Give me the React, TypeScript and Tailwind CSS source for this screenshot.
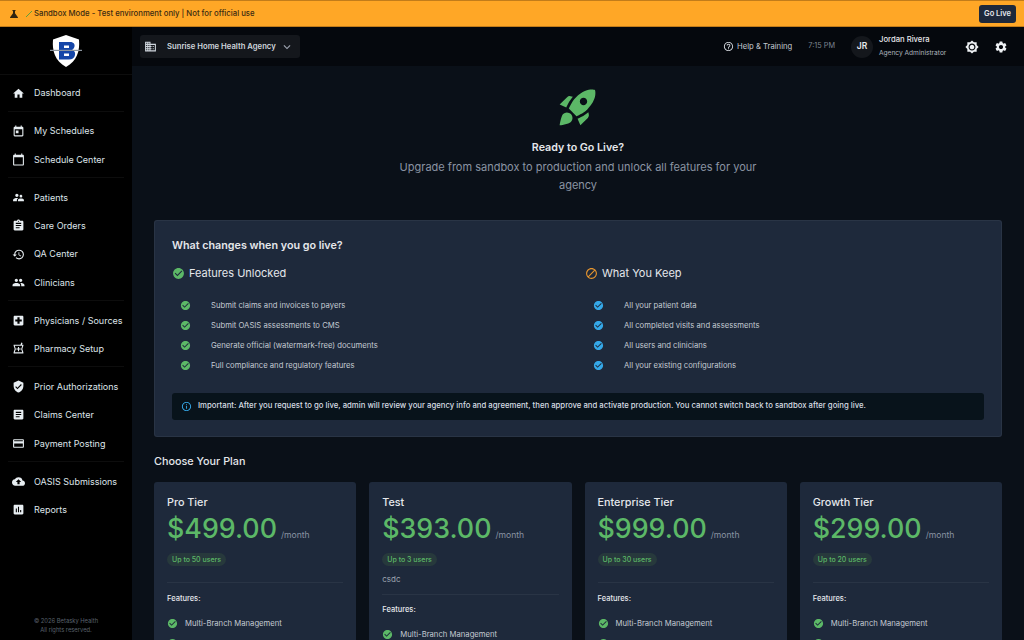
import { ReactNode } from 'react'
import {
  MdArticle,
  MdAssessment,
  MdAssignment,
  MdBlock,
  MdBrightness7,
  MdBusiness,
  MdCalendarToday,
  MdCheckCircle,
  MdCloudUpload,
  MdCreditCard,
  MdHelpOutline,
  MdHistory,
  MdHome,
  MdInfoOutline,
  MdKeyboardArrowDown,
  MdLocalHospital,
  MdOutlineLocalPharmacy,
  MdPeople,
  MdRocketLaunch,
  MdScience,
  MdSettings,
  MdSupervisorAccount,
  MdToday,
  MdVerifiedUser,
} from 'react-icons/md'

const navGroups: { label: string; icon: ReactNode }[][] = [
  [{ label: 'Dashboard', icon: <MdHome /> }],
  [
    { label: 'My Schedules', icon: <MdToday /> },
    { label: 'Schedule Center', icon: <MdCalendarToday /> },
  ],
  [
    { label: 'Patients', icon: <MdSupervisorAccount /> },
    { label: 'Care Orders', icon: <MdAssignment /> },
    { label: 'QA Center', icon: <MdHistory /> },
    { label: 'Clinicians', icon: <MdPeople /> },
  ],
  [
    { label: 'Physicians / Sources', icon: <MdLocalHospital /> },
    { label: 'Pharmacy Setup', icon: <MdOutlineLocalPharmacy /> },
  ],
  [
    { label: 'Prior Authorizations', icon: <MdVerifiedUser /> },
    { label: 'Claims Center', icon: <MdArticle /> },
    { label: 'Payment Posting', icon: <MdCreditCard /> },
  ],
  [
    { label: 'OASIS Submissions', icon: <MdCloudUpload /> },
    { label: 'Reports', icon: <MdAssessment /> },
  ],
]

const unlocked = [
  'Submit claims and invoices to payers',
  'Submit OASIS assessments to CMS',
  'Generate official (watermark-free) documents',
  'Full compliance and regulatory features',
]

const kept = [
  'All your patient data',
  'All completed visits and assessments',
  'All users and clinicians',
  'All your existing configurations',
]

const plans = [
  { name: 'Pro Tier', price: '$499.00', users: 'Up to 50 users' },
  { name: 'Test', price: '$393.00', users: 'Up to 3 users', note: 'csdc' },
  { name: 'Enterprise Tier', price: '$999.00', users: 'Up to 30 users' },
  { name: 'Growth Tier', price: '$299.00', users: 'Up to 20 users' },
]

function Logo() {
  return (
    <svg width="34" height="34" viewBox="0 0 34 34">
      <path d="M17 1 L30 5.500 C31 17 28 27 17 33 C6 27 3 17 4 5.500 Z" fill="#ffffff" />
      <path d="M10 8 H21 C25 8 26 10.500 25.500 12.500 C25 14.500 24 15.500 23 16 C25.500 16.500 26.500 18.500 26 21 C25.500 24 23 25.500 20 25.500 H10 Z" fill="#1546a8" />
      <rect x="15" y="11.500" width="5" height="2.500" fill="#ffffff" />
      <rect x="15" y="19.500" width="5" height="2.500" fill="#ffffff" />
      <rect x="1" y="15.800" width="32" height="1.200" fill="#8b949e" />
    </svg>
  )
}

function Sidebar() {
  return (
    <aside className="flex w-[132px] shrink-0 flex-col bg-black">
      <div className="flex h-[48px] shrink-0 items-center justify-center border-b border-white/5">
        <Logo />
      </div>
      <nav className="flex flex-col px-[8px] pt-[4px]">
        {navGroups.map((group, i) => (
          <div key={i} className={i > 0 ? 'mt-[3.6px] border-t border-white/5 pt-[5px]' : ''}>
            {group.map((item) => (
              <div key={item.label} className="flex h-[28.35px] items-center gap-[9px] pl-[4px] text-[9px] text-[#dfe5ea]">
                <span className="shrink-0 text-[13px] text-[#e8eef2]">{item.icon}</span>
                <span className="whitespace-nowrap">{item.label}</span>
              </div>
            ))}
          </div>
        ))}
      </nav>
      <div className="mt-auto pb-[6px] text-center text-[5.8px] leading-[9px] text-[#5b636d]">
        <p>© 2026 Betasky Health</p>
        <p>All rights reserved.</p>
      </div>
    </aside>
  )
}

function Header() {
  return (
    <header className="flex h-[39px] shrink-0 items-center bg-[#05080d] pr-[16px] pl-[8px]">
      <div className="flex h-[23px] w-[160px] items-center rounded-[3px] bg-[#14171c] pl-[4px] text-[#cfd6dd]">
        <MdBusiness className="text-[13px]" />
        <span className="ml-[10px] text-[7.7px] font-semibold whitespace-nowrap">Sunrise Home Health Agency</span>
        <MdKeyboardArrowDown className="ml-[4px] text-[14px] text-[#9ca3af]" />
      </div>
      <div className="ml-auto flex items-center text-[#d1d5db]">
        <MdHelpOutline className="text-[11px]" />
        <span className="ml-[3px] text-[7.7px] text-[#c3c9d0]">Help &amp; Training</span>
        <span className="ml-[16px] text-[7.3px] text-[#7b8490]">7:15 PM</span>
        <div className="ml-[16px] flex h-[22px] w-[22px] items-center justify-center rounded-full bg-[#14171c] text-[8.5px] font-semibold text-[#e5e7eb]">
          JR
        </div>
        <div className="ml-[6px] w-[80px]">
          <p className="text-[7.7px] leading-[12px] font-medium text-[#e5e7eb]">Jordan Rivera</p>
          <p className="mt-[1px] text-[6.6px] leading-[12px] text-[#aeb5bd]">Agency Administrator</p>
        </div>
        <MdBrightness7 className="ml-[6px] text-[14px] text-[#eef1f4]" />
        <MdSettings className="ml-[15px] text-[14px] text-[#eef1f4]" />
      </div>
    </header>
  )
}

function ChangeList({ items, color }: { items: string[]; color: string }) {
  return (
    <ul className="mt-[16px] flex flex-col">
      {items.map((item) => (
        <li key={item} className="flex h-[19.8px] items-center pl-[8px] text-[7.7px] text-[#c4cad2]">
          <MdCheckCircle className={`shrink-0 text-[11px] ${color}`} />
          <span className="ml-[20px]">{item}</span>
        </li>
      ))}
    </ul>
  )
}

function PlanCard({ plan }: { plan: (typeof plans)[number] }) {
  return (
    <div className="rounded-[3px] bg-[#1e293b] px-[13px] pt-[14px] pb-[20px]">
      <p className="text-[10.8px] leading-[13px] font-medium text-[#e5e7eb]">{plan.name}</p>
      <div className="mt-[2px] flex items-baseline">
        <span className="text-[26.8px] leading-[34px] font-medium text-[#5cb867]">{plan.price}</span>
        <span className="ml-[4px] text-[8.6px] text-[#8a94a3]">/month</span>
      </div>
      <span className="mt-[7.5px] block w-fit rounded-full bg-[#27393c] px-[5px] text-[7px] leading-[13px] font-medium text-[#5cb867]">
        {plan.users}
      </span>
      {plan.note && <p className="mt-[8.5px] text-[8px] leading-[11px] text-[#9ca3af]">{plan.note}</p>}
      <div className={plan.note ? 'mt-[9px] border-t border-white/5 pt-[9px]' : 'mt-[16.5px] border-t border-white/5 pt-[10px]'}>
        <p className="text-[7.5px] leading-[12px] font-medium text-[#e5e7eb]">Features:</p>
        <ul className="mt-[12px] flex flex-col gap-[7px]">
          <li className="flex h-[13px] items-center gap-[7px] text-[7.7px] text-[#c4cad2]">
            <MdCheckCircle className="shrink-0 text-[11px] text-[#5cb867]" />
            <span>Multi-Branch Management</span>
          </li>
          <li className="flex h-[13px] items-center">
            <MdCheckCircle className="shrink-0 text-[11px] text-[#5cb867]" />
          </li>
        </ul>
      </div>
    </div>
  )
}

export default function App() {
  return (
    <div className="flex h-screen flex-col overflow-hidden bg-[#0a1018] font-['Inter',sans-serif]">
      <div className="flex h-[27px] shrink-0 items-center border-y border-y-[#c27c1a] bg-[#ffa726] pr-[8px] pl-[8px] text-[7.75px] font-medium text-[#3a2a12]">
        <MdScience className="text-[12px] text-[#33240f]" />
        <svg className="ml-[5px]" width="8" height="8" viewBox="0 0 8 8">
          <path d="M1 7 L7 1" stroke="#5f9e3a" strokeWidth="1" />
        </svg>
        <span className="ml-[1px]">Sandbox Mode - Test environment only | Not for official use</span>
        <button className="ml-auto h-[18px] rounded-[3px] bg-[#1e293b] px-[5px] text-[7.5px] font-semibold text-[#e5e7eb]">Go Live</button>
      </div>
      <div className="flex min-h-0 flex-1">
        <Sidebar />
        <div className="flex min-w-0 flex-1 flex-col">
          <Header />
          <main className="min-h-0 flex-1 overflow-hidden px-[22px] pt-[19px]">
            <div className="flex flex-col items-center text-center">
              <MdRocketLaunch className="text-[44px] text-[#5cb867]" />
              <h1 className="mt-[11px] text-[10.7px] leading-[16px] font-semibold text-[#e5e7eb]">Ready to Go Live?</h1>
              <p className="mt-[2px] w-[370px] text-[11px] leading-[18px] text-[#8a94a3]">
                Upgrade from sandbox to production and unlock all features for your agency
              </p>
            </div>

            <section className="mt-[26px] rounded-[3px] border border-white/5 bg-[#1e293b] px-[17px] pt-[17.5px] pb-[16px]">
              <h2 className="text-[10.75px] leading-[14px] font-semibold text-[#e5e7eb]">What changes when you go live?</h2>
              <div className="mt-[13.5px] grid grid-cols-2 gap-[14px]">
                <div>
                  <h3 className="flex items-center gap-[4px] text-[11px] leading-[14px] text-[#e5e7eb]">
                    <MdCheckCircle className="text-[13px] text-[#5cb867]" />
                    Features Unlocked
                  </h3>
                  <ChangeList items={unlocked} color="text-[#5cb867]" />
                </div>
                <div>
                  <h3 className="flex items-center gap-[4px] text-[11px] leading-[14px] text-[#e5e7eb]">
                    <MdBlock className="text-[13px] text-[#e8962e]" />
                    What You Keep
                  </h3>
                  <ChangeList items={kept} color="text-[#35a8e8]" />
                </div>
              </div>
              <div className="mt-[17.5px] flex h-[27px] items-center rounded-[3px] bg-[#08131b] pl-[9px] text-[7.75px] font-medium text-[#d7dde3]">
                <MdInfoOutline className="mr-[6px] shrink-0 text-[11px] text-[#35a8e8]" />
                Important: After you request to go live, admin will review your agency info and agreement, then approve and activate production. You cannot switch back to sandbox after going live.
              </div>
            </section>

            <h2 className="mt-[18.5px] text-[10.8px] leading-[14px] font-medium text-[#e5e7eb]">Choose Your Plan</h2>
            <div className="mt-[13px] grid grid-cols-4 items-start gap-[13px]">
              {plans.map((plan) => (
                <PlanCard key={plan.name} plan={plan} />
              ))}
            </div>
          </main>
        </div>
      </div>
    </div>
  )
}
